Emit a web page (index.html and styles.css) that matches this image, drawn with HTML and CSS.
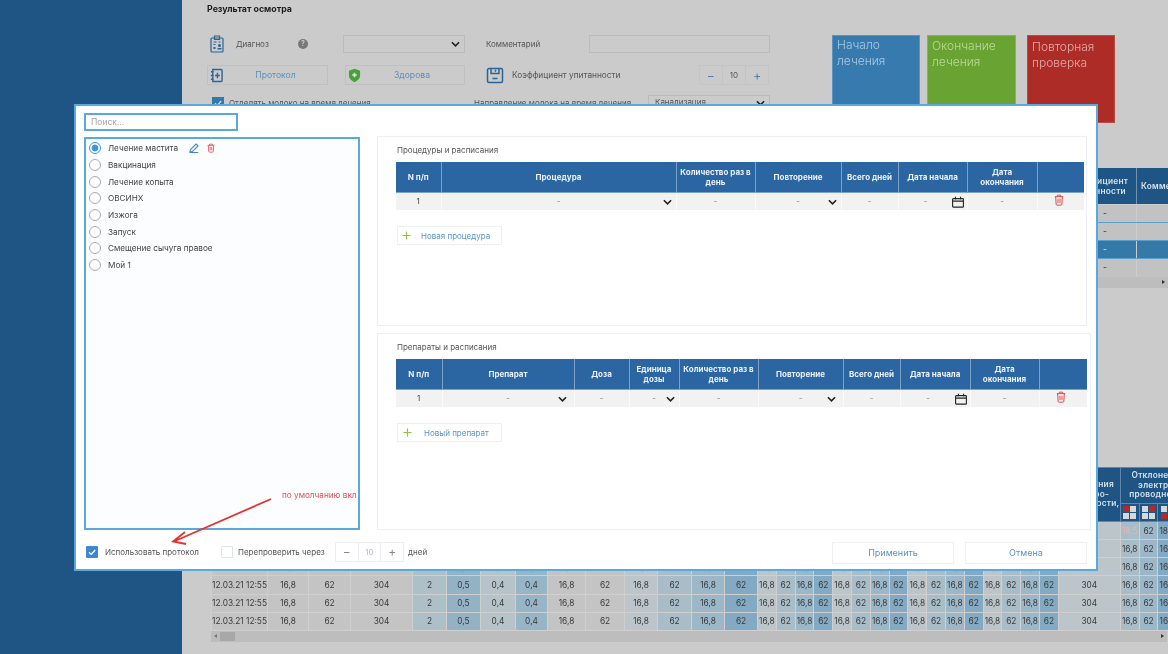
FILE: index.html
```html
<!DOCTYPE html>
<html lang="ru">
<head>
<meta charset="utf-8">
<title>Результат осмотра</title>
<link rel="stylesheet" href="styles.css">
</head>
<body>
<svg class="sprite" aria-hidden="true">
  <symbol id="chev" viewBox="0 0 10 6"><path d="M1 1l4 4 4-4" fill="none" stroke="#222" stroke-width="1.8"/></symbol>
  <symbol id="trash" viewBox="0 0 12 14"><path d="M1 3h10M4 3V1.2h4V3M2 3l.6 9.2q.1 1 1 1h4.800q.9 0 1-1L10 3M4.800 5.500v5M7.200 5.500v5" fill="none" stroke="#e5484d" stroke-width="1.200"/></symbol>
  <symbol id="cal" viewBox="0 0 14 14"><path d="M1.500 3h11a.8.8 0 0 1 .8.8v8.400a.8.8 0 0 1-.8.8h-11a.8.8 0 0 1-.8-.8V3.800a.8.8 0 0 1 .8-.8zM.7 6h12.600M4 1v3M10 1v3" fill="none" stroke="#222" stroke-width="1.300"/></symbol>
  <symbol id="plus" viewBox="0 0 10 10"><path d="M5 .5v9M.5 5h9" fill="none" stroke="#8cc63f" stroke-width="1.300"/></symbol>
</svg>
<div class="app">
  <aside class="sidebar"></aside>
  <main class="page">
    <h1 class="page-title">Результат осмотра</h1>
    <section class="top">
      <div class="form">
        <div class="form-row r1">
          <svg class="ico-clip" viewBox="0 0 14 18"><path d="M2 3h10a1 1 0 0 1 1 1v12a1 1 0 0 1-1 1H2a1 1 0 0 1-1-1V4a1 1 0 0 1 1-1zM4.500 1h5v3.500h-5zM3.500 7h3M3.500 9.500h2M8.500 7h2" fill="none" stroke="#2b6496" stroke-width="1.200"/><circle cx="9.500" cy="10.500" r="1.500" fill="#2b6496"/><path d="M3.500 12h2v2h-2zM7.500 13h4v1.500h-4z" fill="#2b6496"/></svg>
          <span class="lbl lbl-diag">Диагноз</span>
          <span class="help">?</span>
          <span class="bg-select sel-diag"><svg class="chev"><use href="#chev"/></svg></span>
          <span class="lbl lbl-com">Комментарий</span>
          <span class="bg-input"></span>
        </div>
        <div class="form-row r2">
          <span class="bg-btn btn-prot">
            <svg class="btn-ico" viewBox="0 0 14 16"><path d="M3 1.500h9a1 1 0 0 1 1 1v11a1 1 0 0 1-1 1H3zM1 4h3M1 8h3M1 12h3M8 5v6M5.500 8h5" fill="none" stroke="#2b6496" stroke-width="1.500"/></svg>
            <span>Протокол</span>
          </span>
          <span class="bg-btn btn-health">
            <svg class="btn-ico" viewBox="0 0 14 16"><path d="M7 .8l6 2.200v5q0 4.500-6 7.200Q1 12.500 1 8V3z" fill="#49a03a"/><path d="M7 5v5M4.500 7.500h5" stroke="#d8e8d0" stroke-width="1.800"/></svg>
            <span>Здорова</span>
          </span>
          <svg class="ico-scale" viewBox="0 0 18 18"><path d="M3 2.500h12a1.500 1.500 0 0 1 1.500 1.500v11a1.500 1.500 0 0 1-1.500 1.500H3A1.500 1.500 0 0 1 1.500 15V4A1.500 1.500 0 0 1 3 2.500zM5 2.500v5h8v-5M6.500 12.500h5M9 5.500l1-1.500" fill="none" stroke="#2b6496" stroke-width="1.500"/></svg>
          <span class="lbl lbl-koef">Коэффициент упитанности</span>
          <div class="stepper st-bg"><span>&minus;</span><span>10</span><span>+</span></div>
        </div>
        <div class="form-row r3">
          <span class="bg-check"><svg viewBox="0 0 12 12"><path d="M3 6.200l2.200 2.200L9.200 4" fill="none" stroke="#cfe0ee" stroke-width="1.300"/></svg></span>
          <span class="lbl lbl-milk">Отделять молоко на время лечения</span>
          <span class="lbl lbl-dir">Направление молока на время лечения</span>
          <span class="bg-select sel-dir">Канализация<svg class="chev"><use href="#chev"/></svg></span>
        </div>
      </div>
      <div class="tiles">
        <div class="tile tile-blue">Начало<br>лечения</div>
        <div class="tile tile-green">Окончание<br>лечения</div>
        <div class="tile tile-red">Повторная<br>проверка</div>
      </div>
    </section>

    <section class="side-table">
      <div class="st-head"><span class="st-k">Коэффициент<br>упитанности</span><span class="st-c">Комментарий</span></div>
      <div class="st-row"><span>-</span><span></span></div>
      <div class="st-row"><span>-</span><span></span></div>
      <div class="st-row st-active"><span>-</span><span></span></div>
      <div class="st-row"><span>-</span><span></span></div>
      <div class="st-scroll"><i class="arrow-r"></i></div>
    </section>

    <table class="log">
      <colgroup>
        <col class="c56"><col class="c41"><col class="c42"><col class="c62"><col class="c34"><col class="c34"><col class="c35"><col class="c32">
        <col class="c38"><col class="c39"><col class="c33"><col class="c34"><col class="c33"><col class="c33">
        <col class="s"><col class="s"><col class="s"><col class="s"><col class="s"><col class="s"><col class="s"><col class="s">
        <col class="s"><col class="s"><col class="s"><col class="s"><col class="s"><col class="s"><col class="s"><col class="s">
        <col class="c62"><col class="s"><col class="s"><col class="s"><col class="s">
      </colgroup>
      <thead>
        <tr class="h1">
          <th colspan="30" rowspan="2"></th>
          <th rowspan="2">Изменения<br>электро-<br>проводности,</th>
          <th colspan="4">Отклонение<br>электро-<br>проводности</th>
        </tr>
        <tr class="h2">
          <th><span class="quad"><i class="on"></i><i></i><i></i><i></i></span></th>
          <th><span class="quad"><i></i><i class="on"></i><i></i><i></i></span></th>
          <th><span class="quad"><i></i><i></i><i class="on"></i><i></i></span></th>
          <th><span class="quad"><i></i><i></i><i></i><i class="on"></i></span></th>
        </tr>
      </thead>
      <tbody>
        <tr><td>12.03.21 12:55</td><td>16,8</td><td>62</td><td>304</td><td>2</td><td>0,5</td><td>0,4</td><td>0,4</td><td>16,8</td><td>62</td><td>16,8</td><td>62</td><td>16,8</td><td>62</td><td>16,8</td><td>62</td><td>16,8</td><td>62</td><td>16,8</td><td>62</td><td>16,8</td><td>62</td><td>16,8</td><td>62</td><td>16,8</td><td>62</td><td>16,8</td><td>62</td><td>16,8</td><td>62</td><td>304</td><td class="alert">18,5</td><td>62</td><td>18,5</td><td>62</td></tr>
        <tr><td>12.03.21 12:55</td><td>16,8</td><td>62</td><td>304</td><td>2</td><td>0,5</td><td>0,4</td><td>0,4</td><td>16,8</td><td>62</td><td>16,8</td><td>62</td><td>16,8</td><td>62</td><td>16,8</td><td>62</td><td>16,8</td><td>62</td><td>16,8</td><td>62</td><td>16,8</td><td>62</td><td>16,8</td><td>62</td><td>16,8</td><td>62</td><td>16,8</td><td>62</td><td>16,8</td><td>62</td><td>304</td><td>16,8</td><td>62</td><td>16,8</td><td>62</td></tr>
        <tr><td>12.03.21 12:55</td><td>16,8</td><td>62</td><td>304</td><td>2</td><td>0,5</td><td>0,4</td><td>0,4</td><td>16,8</td><td>62</td><td>16,8</td><td>62</td><td>16,8</td><td>62</td><td>16,8</td><td>62</td><td>16,8</td><td>62</td><td>16,8</td><td>62</td><td>16,8</td><td>62</td><td>16,8</td><td>62</td><td>16,8</td><td>62</td><td>16,8</td><td>62</td><td>16,8</td><td>62</td><td>304</td><td>16,8</td><td>62</td><td>16,8</td><td>62</td></tr>
        <tr><td>12.03.21 12:55</td><td>16,8</td><td>62</td><td>304</td><td>2</td><td>0,5</td><td>0,4</td><td>0,4</td><td>16,8</td><td>62</td><td>16,8</td><td>62</td><td>16,8</td><td>62</td><td>16,8</td><td>62</td><td>16,8</td><td>62</td><td>16,8</td><td>62</td><td>16,8</td><td>62</td><td>16,8</td><td>62</td><td>16,8</td><td>62</td><td>16,8</td><td>62</td><td>16,8</td><td>62</td><td>304</td><td>16,8</td><td>62</td><td>16,8</td><td>62</td></tr>
        <tr><td>12.03.21 12:55</td><td>16,8</td><td>62</td><td>304</td><td>2</td><td>0,5</td><td>0,4</td><td>0,4</td><td>16,8</td><td>62</td><td>16,8</td><td>62</td><td>16,8</td><td>62</td><td>16,8</td><td>62</td><td>16,8</td><td>62</td><td>16,8</td><td>62</td><td>16,8</td><td>62</td><td>16,8</td><td>62</td><td>16,8</td><td>62</td><td>16,8</td><td>62</td><td>16,8</td><td>62</td><td>304</td><td>16,8</td><td>62</td><td>16,8</td><td>62</td></tr>
        <tr><td>12.03.21 12:55</td><td>16,8</td><td>62</td><td>304</td><td>2</td><td>0,5</td><td>0,4</td><td>0,4</td><td>16,8</td><td>62</td><td>16,8</td><td>62</td><td>16,8</td><td>62</td><td>16,8</td><td>62</td><td>16,8</td><td>62</td><td>16,8</td><td>62</td><td>16,8</td><td>62</td><td>16,8</td><td>62</td><td>16,8</td><td>62</td><td>16,8</td><td>62</td><td>16,8</td><td>62</td><td>304</td><td>16,8</td><td>62</td><td>16,8</td><td>62</td></tr>
      </tbody>
    </table>
    <div class="log-scroll"><i class="arrow-l"></i><b class="thumb"></b><i class="arrow-r"></i></div>
  </main>
</div>

<div class="modal">
  <div class="modal-body">
    <div class="left">
      <input class="search" type="text" placeholder="Поиск...">
      <ul class="list">
        <li><span class="radio on"></span><span class="name">Лечение мастита</span>
          <svg class="ico-edit" viewBox="0 0 12 12"><path d="M8.500 1.200l2.300 2.300-6.800 6.800-2.900.6.600-2.900zM1 11.500h10" fill="none" stroke="#3d86c6" stroke-width="1.300"/></svg>
          <svg class="ico-del"><use href="#trash"/></svg></li>
        <li><span class="radio"></span><span class="name">Вакцинация</span></li>
        <li><span class="radio"></span><span class="name">Лечение копыта</span></li>
        <li><span class="radio"></span><span class="name">ОВСИНХ</span></li>
        <li><span class="radio"></span><span class="name">Изжога</span></li>
        <li><span class="radio"></span><span class="name">Запуск</span></li>
        <li><span class="radio"></span><span class="name">Смещение сычуга правое</span></li>
        <li><span class="radio"></span><span class="name">Мой 1</span></li>
      </ul>
    </div>
    <div class="right">
      <section class="panel panel-a">
        <h2 class="panel-title">Процедуры и расписания</h2>
        <table class="grid grid-a">
          <colgroup><col class="a1"><col class="a2"><col class="a3"><col class="a4"><col class="a5"><col class="a6"><col class="a7"><col class="a8"></colgroup>
          <thead><tr><th>N п/п</th><th>Процедура</th><th>Количество раз в день</th><th>Повторение</th><th>Всего дней</th><th>Дата начала</th><th>Дата окончания</th><th></th></tr></thead>
          <tbody><tr>
            <td class="num">1</td>
            <td class="has-ico">-<svg class="cell-chev"><use href="#chev"/></svg></td>
            <td>-</td>
            <td class="has-ico">-<svg class="cell-chev"><use href="#chev"/></svg></td>
            <td>-</td>
            <td class="has-ico date">-<svg class="cell-cal"><use href="#cal"/></svg></td>
            <td>-</td>
            <td class="has-ico"><svg class="cell-trash"><use href="#trash"/></svg></td>
          </tr></tbody>
        </table>
        <button class="add add-a" type="button"><svg class="add-plus"><use href="#plus"/></svg>Новая процедура</button>
      </section>
      <section class="panel panel-b">
        <h2 class="panel-title">Препараты и расписания</h2>
        <table class="grid grid-b">
          <colgroup><col class="b1"><col class="b2"><col class="b3"><col class="b4"><col class="b5"><col class="b6"><col class="b7"><col class="b8"><col class="b9"><col class="b10"></colgroup>
          <thead><tr><th>N п/п</th><th>Препарат</th><th>Доза</th><th>Единица дозы</th><th>Количество раз в день</th><th>Повторение</th><th>Всего дней</th><th>Дата начала</th><th>Дата окончания</th><th></th></tr></thead>
          <tbody><tr>
            <td class="num">1</td>
            <td class="has-ico chev-in">-<svg class="cell-chev"><use href="#chev"/></svg></td>
            <td>-</td>
            <td class="has-ico">-<svg class="cell-chev"><use href="#chev"/></svg></td>
            <td>-</td>
            <td class="has-ico chev-in">-<svg class="cell-chev"><use href="#chev"/></svg></td>
            <td>-</td>
            <td class="has-ico date">-<svg class="cell-cal"><use href="#cal"/></svg></td>
            <td>-</td>
            <td class="has-ico"><svg class="cell-trash"><use href="#trash"/></svg></td>
          </tr></tbody>
        </table>
        <button class="add add-b" type="button"><svg class="add-plus"><use href="#plus"/></svg>Новый препарат</button>
      </section>
    </div>
  </div>
  <footer class="modal-foot">
    <span class="check on"><svg viewBox="0 0 12 12"><path d="M3 6.200l2.200 2.200L9.200 4" fill="none" stroke="#fff" stroke-width="1.300"/></svg></span>
    <span class="foot-lbl use">Использовать протокол</span>
    <span class="check off"></span>
    <span class="foot-lbl recheck">Перепроверить через</span>
    <div class="stepper st-modal"><span>&minus;</span><span class="val">10</span><span>+</span></div>
    <span class="foot-lbl days">дней</span>
    <button class="action apply" type="button">Применить</button>
    <button class="action cancel" type="button">Отмена</button>
  </footer>
  <span class="note">по умолчанию вкл</span>
  <svg class="note-arrow" viewBox="0 0 110 50"><path d="M104 2L8 44M18 35L6 44.500 19 47" fill="none" stroke="#e2332e" stroke-width="1.800"/></svg>
</div>
</body>
</html>
```
FILE: styles.css
```css
* { box-sizing: border-box; }
html, body { margin: 0; height: 100%; }
body {
  width: 1168px; height: 654px; overflow: hidden; position: relative;
  font-family: Inter, "Noto Sans", "Liberation Sans", sans-serif;
  font-size: 8.500px; color: #444; background: #cbcbcb;
}
.sprite { position: absolute; width: 0; height: 0; }
.app { display: flex; width: 1168px; height: 654px; filter: blur(.4px); }
.sidebar { width: 182px; flex: none; background: #1f5585; }
.page { flex: 1; min-width: 0; padding: 4px 0 0 25px; overflow: hidden; background: #cbcbcb; }
.page-title { margin: 0; font-size: 8.800px; line-height: 10px; font-weight: 700; color: #1c1c1c; }

.top { display: flex; margin-top: 21px; height: 133px; }
.form { width: 563px; flex: none; }
.form-row { display: flex; align-items: center; }
.r1 { height: 18px; }
.r2 { height: 20px; margin-top: 12px; }
.r3 { height: 18px; margin-top: 12px; align-items: flex-start; }
.lbl { color: #555; font-size: 8px; white-space: nowrap; }
.ico-clip { width: 14px; height: 18px; margin-left: 3px; flex: none; }
.lbl-diag { margin-left: 12px; width: 60px; }
.help { width: 10px; height: 10px; border-radius: 50%; background: #777; color: #ccc; font-size: 7px; font-weight: 700; text-align: center; line-height: 10px; margin-left: 2px; }
.bg-select { position: relative; display: block; height: 18px; border: 1px solid #bbb; color: #555; font-size: 8px; line-height: 16px; padding-left: 6px; }
.chev { position: absolute; right: 4px; top: 5px; width: 9px; height: 6px; }
.sel-diag { width: 122px; margin-left: 35px; }
.lbl-com { margin-left: 21px; width: 103px; }
.bg-input { width: 181px; height: 18px; border: 1px solid #bbb; }
.bg-btn { position: relative; display: flex; align-items: center; justify-content: center; height: 20px; border: 1px solid #c0c0c0; color: #5a8fbe; font-size: 8.600px; }
.btn-ico { position: absolute; left: 2px; top: 2px; width: 13px; height: 15px; }
.btn-prot { width: 121px; padding-left: 16px; }
.btn-health { width: 120px; margin-left: 17px; padding-left: 14px; }
.ico-scale { width: 18px; height: 18px; margin-left: 21px; flex: none; }
.lbl-koef { margin-left: 8px; width: 187px; font-size: 8.300px; }
.stepper { display: flex; height: 20px; border: 1px solid #c4c4c4; }
.stepper span { display: flex; align-items: center; justify-content: center; flex: 1; font-size: 8px; }
.stepper span + span { border-left: 1px solid #c4c4c4; }
.st-bg { width: 70px; color: #4d7fa8; }
.st-bg span:nth-child(2) { color: #555; flex: 1.050; }
.st-bg span:first-child, .st-bg span:last-child { font-size: 12px; }
.bg-check { width: 12px; height: 12px; margin-left: 5px; background: #3579a8; flex: none; }
.bg-check svg { display: block; width: 12px; height: 12px; }
.lbl-milk { margin-left: 5px; width: 245px; line-height: 12px; }
.lbl-dir { width: 174px; line-height: 12px; }
.sel-dir { width: 122px; margin-top: -2px; line-height: 13px; }
.sel-dir .chev { top: 4px; }

.tiles { display: flex; margin-left: 62px; }
.tile { width: 88px; height: 88px; padding: 1px 4px; font-size: 12px; line-height: 15.500px; font-weight: 300; }
.tile-blue { background: #377aad; color: #a9cbe3; border: 1px solid #5b93c0; }
.tile-green { width: 89px; margin-left: 7px; background: #69a331; color: #bcd99c; border: 1px solid #86b654; padding-top: 2px; }
.tile-red { margin-left: 11px; background: #ae2c27; color: #e2aaa7; border: 1px solid #bb4a45; padding-top: 3px; }

.side-table { margin-left: 853px; width: 320px; color: #fff; }
.st-head { display: flex; height: 36px; background: #1f5585; margin-bottom: 1px; font-size: 8.300px; font-weight: 600; letter-spacing: .25px; line-height: 10.500px; align-items: center; text-align: center; color: #d5e2ee; }
.st-k { width: 77px; border-right: 1px solid #6f93b3; height: 100%; display: flex; align-items: center; justify-content: center; }
.st-c { flex: 1; text-align: left; padding-left: 4px; }
.st-row { display: flex; height: 18px; background: #c2c2c2; color: #333; border-bottom: 1px solid #5aa0cc; }
.st-row span { width: 77px; padding-left: 43px; line-height: 16px; border-right: 1px solid #cdcdcd; }
.st-row:nth-child(5) { border-bottom: 0; }
.st-active { background: #3579a8; color: #cfe; }
.st-scroll { position: relative; height: 11px; background: #bdbdbd; width: 70px; margin-left: 38px; }
.arrow-r, .arrow-l { position: absolute; top: 50%; width: 0; height: 0; margin-top: -2.500px; border: 2.500px solid transparent; }
.arrow-r { right: 3px; border-right-width: 0; border-left: 3px solid #333; }
.arrow-l { left: 3px; border-left-width: 0; border-right: 3px solid #777; }

.log { margin: 179px 0 0 4px; border-collapse: collapse; table-layout: fixed; width: 984px; font-size: 8.300px; }
.c56 { width: 56px; } .c41 { width: 41px; } .c42 { width: 42px; } .c62 { width: 62px; }
.c34 { width: 34px; } .c35 { width: 35px; } .c33 { width: 33px; } .c32 { width: 32px; } .c38 { width: 38px; } .c39 { width: 39px; }
.s { width: 18.800px; }
.log th { background: #1f5585; color: #d5e2ee; font-size: 8.300px; font-weight: 600; letter-spacing: .25px; line-height: 9.500px; padding: 0; border: 1px solid #5e87ab; white-space: nowrap; overflow: hidden; text-align: center; }
.h1 { height: 36px; }
.h2 { height: 18px; }
.quad { display: inline-grid; grid-template-columns: 6px 6px; gap: 1px; vertical-align: middle; }
.quad i { width: 6px; height: 6px; background: #d8d8d8; }
.quad i.on { background: #b32a26; }
.log td { height: 18.170px; padding: 0; text-align: center; color: #3a3a3a; background: #c4c4c4; border: 1px solid #cfcfcf; white-space: nowrap; overflow: hidden; }
.log td:nth-child(5) { background: #adbfc7; }
.log td:nth-child(6) { background: #93b3c5; }
.log td:nth-child(7) { background: #b6c3c9; }
.log td:nth-child(8) { background: #96b5c7; }
.log td:nth-child(4n+3):nth-child(n+11) { background: #bcc5c9; }
.log td:nth-child(4n):nth-child(n+11) { background: #a9bdc8; }
.log td:nth-child(4n+1):nth-child(n+11) { background: #9bb7c8; }
.log td:nth-child(4n+2):nth-child(n+11) { background: #83aac2; }
.log td:nth-child(31) { background: #c4c4c4; }
.log td:nth-child(32) { background: #b4c2c8; }
.log td:nth-child(33) { background: #a9bdc8; }
.log td:nth-child(34) { background: #9bb7c8; }
.log td:nth-child(35) { background: #83aac2; }
.log td.alert { background: #b32a26; color: #e8b4b2; }
.log-scroll { position: relative; width: 956px; height: 11px; margin: 0 0 0 4px; background: #bdbdbd; }
.thumb { position: absolute; left: 9px; top: 1px; width: 15px; height: 9px; background: #a8a8a8; }

.modal { position: absolute; left: 74px; top: 104px; width: 1024px; height: 467px; padding: 7px 5px 0 8px; background: #fff; border: 2px solid #5aa9dc; filter: blur(.4px); }
.modal-body { display: flex; height: 417px; }
.left { width: 276px; flex: none; display: flex; flex-direction: column; gap: 6px; }
.search { width: 154px; height: 18px; padding: 0 5px; border: 2px solid #5aa9dc; font: 8.500px Inter, "Noto Sans", sans-serif; outline: none; }
.search::placeholder { color: #a5a5a5; opacity: 1; }
.list { list-style: none; margin: 0; padding: 1px 0 0 3px; height: 393px; border: 2px solid #5aa9dc; background: #fbfdff; }
.list li { display: flex; align-items: center; height: 16.700px; }
.radio { width: 12px; height: 12px; border-radius: 50%; border: 1.300px solid #a9a9a9; background: #fff; flex: none; position: relative; }
.radio.on { border-color: #3c97dc; background: radial-gradient(circle, #3c97dc 0 3.200px, #fff 3.700px); }
.name { margin-left: 7px; color: #444; font-size: 8.200px; white-space: nowrap; }
.ico-edit { width: 10px; height: 10px; margin-left: 11px; flex: none; }
.ico-del { width: 8px; height: 10px; margin-left: 8px; flex: none; }
.right { margin-left: 17px; margin-top: 23px; flex: 1; min-width: 0; display: flex; flex-direction: column; gap: 7px; }
.panel { border: 1px solid #eceff6; padding: 0 0 0 18px; }
.panel-a { width: 710px; height: 190px; }
.panel-b { width: 714px; height: 197px; }
.panel-title { margin: 0; padding: 8px 0 0 1px; height: 25px; font-size: 8px; line-height: 10px; font-weight: 400; color: #555; }
.grid { border-collapse: collapse; table-layout: fixed; }
.grid-a { width: 688px; } .grid-b { width: 691px; }
.a1 { width: 45px; } .a2 { width: 235px; } .a3 { width: 79px; } .a4 { width: 86px; } .a5 { width: 57px; } .a6 { width: 69px; } .a7 { width: 70px; } .a8 { width: 47px; }
.b1 { width: 46px; } .b2 { width: 132px; } .b3 { width: 55px; } .b4 { width: 50px; } .b5 { width: 79px; } .b6 { width: 85px; } .b7 { width: 57px; } .b8 { width: 70px; } .b9 { width: 69px; } .b10 { width: 48px; }
.grid th { height: 30px; padding: 0 2px; background: #2b66a3; color: #eaf1f8; font-size: 8px; line-height: 10px; font-weight: 700; border-left: 1px solid #7ba2c8; border-bottom: 1px solid #7ba2c8; text-align: center; }
.grid th:first-child { border-left: 0; }
.grid td { position: relative; height: 18px; padding: 0; background: #f2f2f2; border-left: 1px solid #fafafa; text-align: center; color: #888; font-size: 8px; }
.grid td:first-child { border-left: 0; }
.grid td.num { color: #444; }
.grid td.date { padding-right: 14px; }
.cell-chev { position: absolute; right: 4px; top: 6.500px; width: 9px; height: 6px; }
.chev-in .cell-chev { right: 6.500px; }
.cell-cal { position: absolute; right: 3px; top: 3px; width: 12px; height: 12px; }
.cell-trash { position: absolute; left: 16.500px; top: 1px; width: 10px; height: 12px; }
.add { display: flex; align-items: center; width: 105px; height: 19px; margin-left: 1px; border: 1px solid #edeff3; background: #fff; color: #5b93c5; font: 8px Inter, "Noto Sans", sans-serif; }
.add-a { margin-top: 16px; padding: 0 0 0 4px; }
.add-b { margin-top: 16px; padding: 0 0 0 5px; }
.add-plus { width: 9px; height: 9px; margin-right: 10px; flex: none; }
.add-b .add-plus { margin-right: 12px; }

.modal-foot { display: flex; align-items: center; height: 23px; margin-top: 11px; }
.check { width: 12px; height: 12px; margin: 0 0 2px 2px; flex: none; display: block; }
.check svg { display: block; width: 12px; height: 12px; }
.check.on { background: #3c87d0; border-radius: 1px; }
.check.off { border: 1.500px solid #dfe3ec; margin-left: 21px; }
.foot-lbl { color: #555; font-size: 8px; white-space: nowrap; margin-bottom: 2px; }
.use { margin-left: 7px; width: 95px; }
.recheck { margin-left: 5px; width: 97px; }
.st-modal { width: 69px; height: 20px; margin-bottom: 2px; border-color: #eceef3; color: #888; }
.st-modal span + span { border-color: #eceef3; }
.st-modal span:first-child, .st-modal span:last-child { font-size: 12px; }
.st-modal .val { color: #bbb; }
.days { margin-left: 4px; width: 424px; }
.action { width: 122px; height: 22px; border: 1px solid #eef0f4; background: #fff; color: #5b93c5; font: 9px Inter, "Noto Sans", sans-serif; }
.cancel { margin-left: 11px; }
.note { position: absolute; left: 206px; top: 384px; color: #e2504c; font-size: 8.200px; line-height: 10px; white-space: nowrap; }
.note-arrow { position: absolute; left: 91px; top: 391px; width: 110px; height: 50px; }
```
